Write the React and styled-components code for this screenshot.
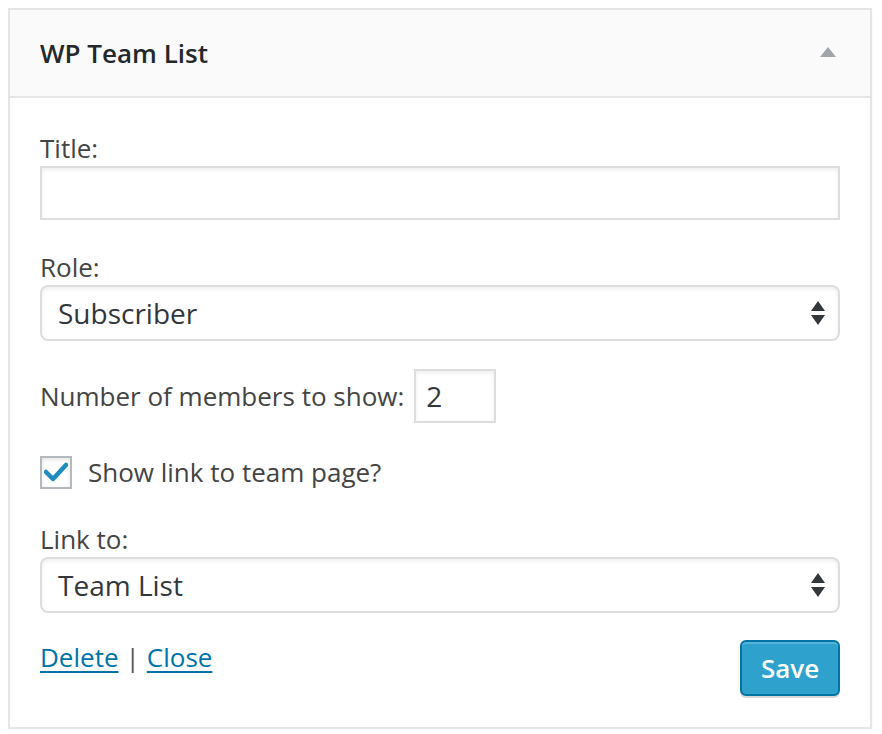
import React from 'react'
import styled, { createGlobalStyle } from 'styled-components'

const Global = createGlobalStyle`
  body {
    margin: 8px;
    background: #fff;
    font-family: "Open Sans", "Liberation Sans", sans-serif;
    color: #444;
  }
  * { box-sizing: border-box; }
`

const Widget = styled.div`
  width: 864px;
  border: 2px solid #e5e5e5;
  background: #fff;
  box-shadow: 0 2px 2px rgba(0, 0, 0, 0.04);
`

const Header = styled.div`
  height: 88px;
  background: #fafafa;
  border-bottom: 2px solid #e5e5e5;
  display: flex;
  align-items: center;
  justify-content: space-between;
  padding: 0 34px 0 30px;
`

const Heading = styled.h3`
  margin: 0;
  font-size: 26px;
  font-weight: 600;
  color: #23282d;
`

const Toggle = styled.span`
  width: 0;
  height: 0;
  border-left: 8px solid transparent;
  border-right: 8px solid transparent;
  border-bottom: 10px solid #a0a5aa;
  margin-bottom: 3px;
`

const Body = styled.div`
  padding: 32px 30px 31px;
  display: flex;
  flex-direction: column;
`

const Field = styled.div`
  display: flex;
  flex-direction: column;
  margin-bottom: ${p => p.gap || 0}px;
`

const Label = styled.label`
  font-size: 26px;
  line-height: 36px;
`

const TextInput = styled.input`
  width: 100%;
  height: 54px;
  border: 2px solid #ddd;
  box-shadow: inset 0 2px 4px rgba(0, 0, 0, 0.07);
  font: inherit;
  font-size: 28px;
  color: #32373c;
  padding: 0 10px;
  outline: none;
`

const SelectBox = styled.div`
  height: 56px;
  border: 2px solid #ddd;
  border-radius: 8px;
  box-shadow: inset 0 2px 4px rgba(0, 0, 0, 0.07);
  display: flex;
  align-items: center;
  justify-content: space-between;
  padding: 0 12px 0 16px;
  font-size: 28px;
  color: #32373c;
`

const Arrows = styled.svg`
  width: 16px;
  height: 28px;
`

const InlineRow = styled.div`
  display: flex;
  align-items: center;
  gap: 10px;
  margin-bottom: ${p => p.gap || 0}px;
`

const NumberInput = styled(TextInput)`
  width: 82px;
  padding: 0 10px;
`

const Check = styled.span`
  width: 32px;
  height: 33px;
  border: 2px solid #b4b9be;
  background: #fff;
  box-shadow: inset 0 2px 4px rgba(0, 0, 0, 0.1);
  display: flex;
  align-items: center;
  justify-content: center;
  margin-right: 6px;
`

const Footer = styled.div`
  display: flex;
  justify-content: space-between;
  align-items: flex-start;
`

const Links = styled.div`
  font-size: 26px;
  line-height: 34px;
  color: #555;
  display: flex;
  gap: 7px;
`

const A = styled.a`
  color: #0073aa;
  text-decoration: underline;
  text-underline-offset: 4px;
  text-decoration-thickness: 2px;
  cursor: pointer;
`

const SaveButton = styled.button`
  width: 100px;
  height: 56px;
  background: #2ea2cc;
  border: 2px solid #0074a2;
  border-radius: 6px;
  color: #fff;
  font: inherit;
  font-size: 26px;
  font-weight: 600;
  box-shadow: inset 0 2px 0 rgba(120, 200, 230, 0.5), 0 2px 0 rgba(0, 0, 0, 0.15);
  cursor: pointer;
`

const SelectArrows = () => (
  <Arrows viewBox="0 0 16 28">
    <path d="M8 2 L15 12 L1 12 Z" fill="#32373c" />
    <path d="M1 16 L15 16 L8 26 Z" fill="#32373c" />
  </Arrows>
)

const App = () => (
  <>
    <Global />
    <Widget>
      <Header>
        <Heading>WP Team List</Heading>
        <Toggle />
      </Header>
      <Body>
        <Field gap={29}>
          <Label>Title:</Label>
          <TextInput defaultValue="" />
        </Field>
        <Field gap={28}>
          <Label>Role:</Label>
          <SelectBox>
            <span>Subscriber</span>
            <SelectArrows />
          </SelectBox>
        </Field>
        <InlineRow gap={31}>
          <Label>Number of members to show:</Label>
          <NumberInput defaultValue="2" />
        </InlineRow>
        <InlineRow gap={31}>
          <Check>
            <svg width="24" height="20" viewBox="0 0 24 20">
              <path d="M2 10 L9 17 L22 3" fill="none" stroke="#1e8cbe" strokeWidth="4.5" strokeLinecap="round" strokeLinejoin="round" />
            </svg>
          </Check>
          <Label>Show link to team page?</Label>
        </InlineRow>
        <Field gap={27}>
          <Label>Link to:</Label>
          <SelectBox>
            <span>Team List</span>
            <SelectArrows />
          </SelectBox>
        </Field>
        <Footer>
          <Links>
            <A>Delete</A>
            <span>|</span>
            <A>Close</A>
          </Links>
          <SaveButton>Save</SaveButton>
        </Footer>
      </Body>
    </Widget>
  </>
)

export default App
